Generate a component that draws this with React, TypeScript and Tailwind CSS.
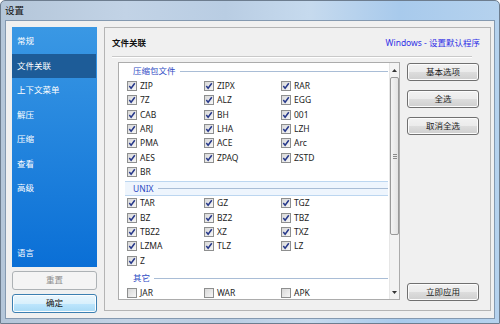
import React from "react";

const FONT = "font-['Noto_Sans','Noto_Sans_CJK_SC',sans-serif]";

function Check({ checked }: { checked: boolean }) {
  return (
    <span className="w-[10px] h-[10px] shrink-0 border border-[#8e8f8f] bg-[linear-gradient(135deg,#d8d8d8,#f6f6f6)] flex items-center justify-center">
      {checked && (
        <svg width="8" height="8" viewBox="0 0 8 8">
          <path d="M1.3 4.1 L3.1 6.2 L6.8 1.2" stroke="#26388a" strokeWidth="1.5" fill="none" />
        </svg>
      )}
    </span>
  );
}

function Item({ label, checked }: { label: string; checked: boolean }) {
  return (
    <div className="h-[14.33px] flex items-center gap-[3px]">
      <Check checked={checked} />
      <span className="text-[8.5px] leading-none text-[#1c1c1c]">{label}</span>
    </div>
  );
}

function Group({
  title,
  items,
  checked,
  band,
  className,
}: {
  title: string;
  items: string[];
  checked: boolean;
  band?: boolean;
  className?: string;
}) {
  return (
    <div className={className}>
      <div
        className={
          "h-[15px] flex items-center pl-[8px] " +
          (band ? "bg-[#eef5fd] border-y border-[#bcd6f0]" : "")
        }
      >
        <span className="text-[8.5px] leading-none text-[#2f4cc4]">{title}</span>
        <span className="flex-1 h-px bg-[#a9bdd6] ml-[4px]" />
      </div>
      <div className="grid grid-cols-[77px_77px_77px] pl-[2px]">
        {items.map((it) => (
          <Item key={it} label={it} checked={checked} />
        ))}
      </div>
    </div>
  );
}

function Btn({ label, className }: { label: string; className?: string }) {
  return (
    <div
      className={
        "h-[18px] rounded-[3px] border border-[#707070] bg-[linear-gradient(to_bottom,#f2f2f2_0%,#ebebeb_50%,#dddddd_51%,#cfcfcf_100%)] flex items-center justify-center text-[8.5px] leading-none text-[#1c1c1c] shadow-[inset_0_0_0_1px_#fcfcfc] " +
        (className ?? "")
      }
    >
      {label}
    </div>
  );
}

export default function App() {
  const nav = ["常规", "文件关联", "上下文菜单", "解压", "压缩", "查看", "高级"];
  const g1 = [
    "ZIP", "ZIPX", "RAR",
    "7Z", "ALZ", "EGG",
    "CAB", "BH", "001",
    "ARJ", "LHA", "LZH",
    "PMA", "ACE", "Arc",
    "AES", "ZPAQ", "ZSTD",
    "BR",
  ];
  const g2 = [
    "TAR", "GZ", "TGZ",
    "BZ", "BZ2", "TBZ",
    "TBZ2", "XZ", "TXZ",
    "LZMA", "TLZ", "LZ",
    "Z",
  ];
  const g3 = ["JAR", "WAR", "APK"];

  return (
    <div
      className={
        FONT +
        " w-[500px] h-[324px] overflow-hidden flex flex-col border border-[#6d7d8f] rounded-t-[5px] bg-[linear-gradient(90deg,#b4c6d9_0%,#c2d3e6_25%,#b9cde3_45%,#c6daee_62%,#a8caec_80%,#b5d2ee_100%)]"
      }
    >
      {/* title bar */}
      <div className="h-[19px] shrink-0 pl-[4px] flex items-center">
        <span className="text-[9.5px] leading-none text-[#101010]">设置</span>
      </div>

      {/* client */}
      <div className="flex-1 mx-[4px] mb-[4px] bg-[#f0f0f0] border border-[#8499b0] flex pl-[6px] pt-[6px] pr-[3px]">
        {/* left column */}
        <div className="w-[85px] flex flex-col">
          <div className="h-[240px] bg-[linear-gradient(to_bottom,#3a98e4,#0a6fd6)] pt-[2px] flex flex-col">
            {nav.map((n) => (
              <div
                key={n}
                className={
                  "h-[24.5px] flex items-center pl-[5px] mr-[1px] text-[8.5px] leading-none text-white " +
                  (n === "文件关联" ? "bg-[#1d5c98]" : "")
                }
              >
                {n}
              </div>
            ))}
            <div className="flex-1" />
            <div className="h-[24px] flex items-center pl-[5px] mb-[2px] text-[8.5px] leading-none text-white">
              语言
            </div>
          </div>
          <div className="mt-[4px] h-[19px] rounded-[3px] border border-[#adb2b5] bg-[#f4f4f4] flex items-center justify-center text-[8.5px] leading-none text-[#8d8d8d]">
            重置
          </div>
          <div className="mt-[4px] h-[19px] rounded-[3px] border border-[#3c7fb1] bg-[linear-gradient(to_bottom,#eaf6fd_0%,#d9f0fc_50%,#bee6fd_51%,#a7d9f5_100%)] shadow-[inset_0_0_0_1px_#fcfdfe] flex items-center justify-center text-[8.5px] leading-none text-[#111]">
            确定
          </div>
        </div>

        {/* right panel */}
        <div className="ml-[7px] w-[387px] h-[284px] border border-[#b4b4b4] bg-[#f0f0f0] pt-[8px] pl-[7px] pr-[10px] flex flex-col">
          <div className="h-[14px] flex items-center justify-between">
            <span className="text-[8.5px] leading-none font-bold text-[#111]">文件关联</span>
            <span className="text-[8.5px] leading-none text-[#2f2fe6]">Windows - 设置默认程序</span>
          </div>
          <div className="mt-[6px] mr-[8px] h-px bg-[#c9c9c9] shadow-[0_1px_0_#ffffff]" />

          <div className="mt-[5px] flex">
            {/* list box */}
            <div className="ml-[6px] w-[282px] h-[238px] border border-[#acacac] bg-white flex">
              <div className="flex-1 overflow-hidden pt-[1px] pl-[6px] pr-[1px]">
                <Group title="压缩包文件" items={g1} checked />
                <Group title="UNIX" items={g2} checked band className="mt-[2px]" />
                <Group title="其它" items={g3} checked={false} className="mt-[3px]" />
              </div>
              {/* scrollbar */}
              <div className="w-[10px] bg-[#f3f3f3] border-l border-[#e6e6e6] flex flex-col">
                <div className="h-[14px] flex items-center justify-center">
                  <svg width="5" height="3" viewBox="0 0 5 3">
                    <path d="M0 3 L2.5 0 L5 3 Z" fill="#333" />
                  </svg>
                </div>
                <div className="h-[158px] rounded-[2px] border border-[#999] bg-[linear-gradient(90deg,#f4f4f4,#e3e3e3)] flex items-center justify-center">
                  <div className="flex flex-col gap-[1px]">
                    <span className="w-[4px] h-px bg-[#8a8a8a]" />
                    <span className="w-[4px] h-px bg-[#8a8a8a]" />
                    <span className="w-[4px] h-px bg-[#8a8a8a]" />
                  </div>
                </div>
                <div className="flex-1" />
                <div className="h-[14px] flex items-center justify-center">
                  <svg width="5" height="3" viewBox="0 0 5 3">
                    <path d="M0 0 L2.5 3 L5 0 Z" fill="#333" />
                  </svg>
                </div>
              </div>
            </div>

            {/* buttons */}
            <div className="ml-[7px] w-[72px] h-[240px] flex flex-col">
              <Btn label="基本选项" className="mt-[1px]" />
              <Btn label="全选" className="mt-[9px]" />
              <Btn label="取消全选" className="mt-[9px]" />
              <div className="flex-1" />
              <Btn label="立即应用" className="mb-[1px]" />
            </div>
          </div>
        </div>
      </div>
    </div>
  );
}
